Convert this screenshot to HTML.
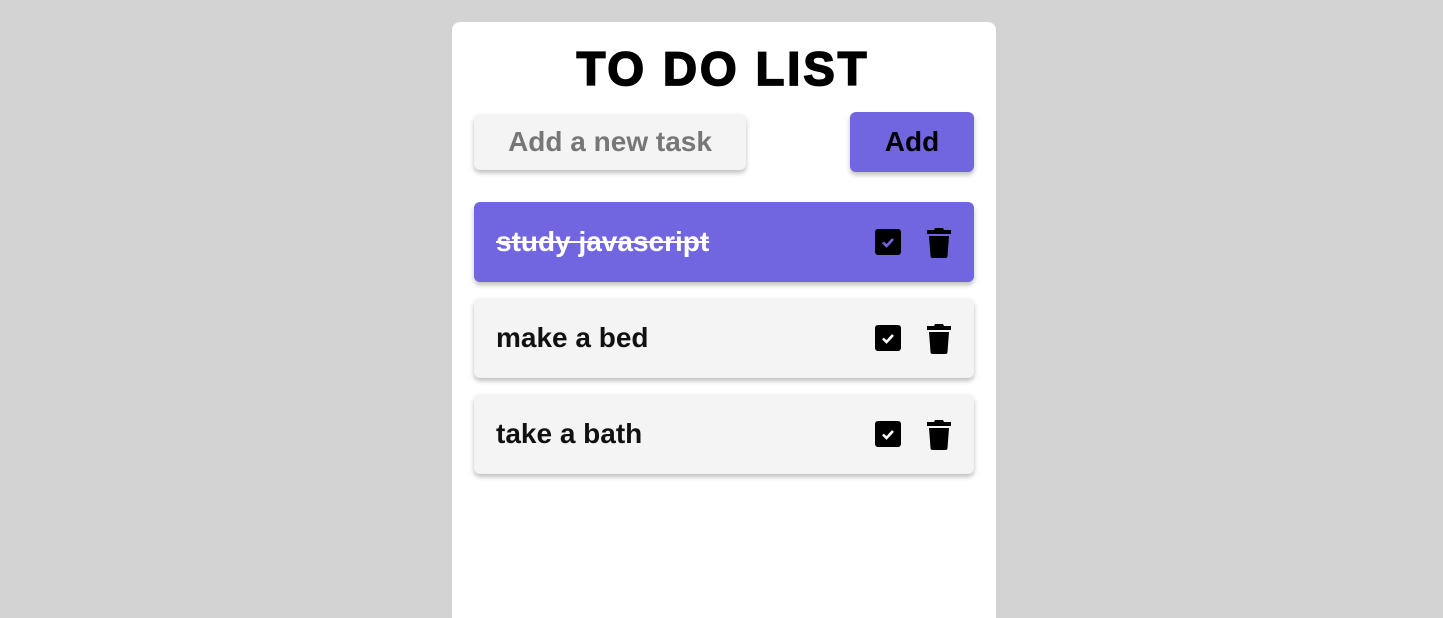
<!DOCTYPE html>
<html><head><style>
html,body{margin:0;height:618px;overflow:hidden}
body{background:#d3d3d3;font-family:"Liberation Sans",Arial,sans-serif;width:1443px;position:relative}
.card{position:absolute;left:452px;top:22px;width:544px;height:596px;background:#fff;border-radius:8px 8px 0 0}
h1{position:absolute;left:0;right:0;top:44px;margin:0;text-align:center;font-size:47px;font-weight:bold;letter-spacing:3px;-webkit-text-stroke:1.8px #000;color:#000;line-height:50px;padding-left:3px}
.inp{position:absolute;left:474px;top:114px;width:272px;height:56px;background:#f4f4f4;border-radius:6px;box-shadow:0 3px 5px rgba(0,0,0,.25);color:#777;font-size:28px;font-weight:bold;text-align:center;line-height:56px}
.btn{position:absolute;left:850px;top:112px;width:124px;height:60px;background:#7165e0;border-radius:6px;box-shadow:0 3px 5px rgba(0,0,0,.25);font-size:28px;font-weight:bold;text-align:center;line-height:60px;color:#000}
.item{position:absolute;left:474px;width:500px;height:80px;background:#f4f4f4;border-radius:6px;box-shadow:0 3px 5px rgba(0,0,0,.25)}
.item span{position:absolute;left:22px;top:0;line-height:80px;font-size:28px;font-weight:bold;color:#111}
.item.done{background:#7165e0}
.item.done span{color:#fff;text-decoration:line-through}
.cb{position:absolute;left:401px;top:27px;width:26px;height:26px;background:#000;border-radius:3px}
.tr{position:absolute;left:452px;top:26px}
</style></head><body>
<div class="card"></div>
<h1>TO DO LIST</h1>
<div class="inp">Add a new task</div>
<div class="btn">Add</div>
<div class="item done" style="top:202px"><span>study javascript</span>
<div class="cb"><svg width="26" height="26"><path d="M8 13.5l3.5 3.5 6.5-7" stroke="#7165e0" stroke-width="2.6" fill="none"/></svg></div>
<svg class="tr" width="26" height="30"><path d="M9 0h8l1 2h7v4H1V2h7z M3 8h20l-1.5 20q-.2 2-2 2h-13q-1.8 0-2-2z" fill="#000"/></svg></div>
<div class="item" style="top:298px"><span>make a bed</span>
<div class="cb"><svg width="26" height="26"><path d="M8 13.5l3.5 3.5 6.5-7" stroke="#fff" stroke-width="2.6" fill="none"/></svg></div>
<svg class="tr" width="26" height="30"><path d="M9 0h8l1 2h7v4H1V2h7z M3 8h20l-1.5 20q-.2 2-2 2h-13q-1.8 0-2-2z" fill="#000"/></svg></div>
<div class="item" style="top:394px"><span>take a bath</span>
<div class="cb"><svg width="26" height="26"><path d="M8 13.5l3.5 3.5 6.5-7" stroke="#fff" stroke-width="2.6" fill="none"/></svg></div>
<svg class="tr" width="26" height="30"><path d="M9 0h8l1 2h7v4H1V2h7z M3 8h20l-1.5 20q-.2 2-2 2h-13q-1.8 0-2-2z" fill="#000"/></svg></div>
</body></html>
